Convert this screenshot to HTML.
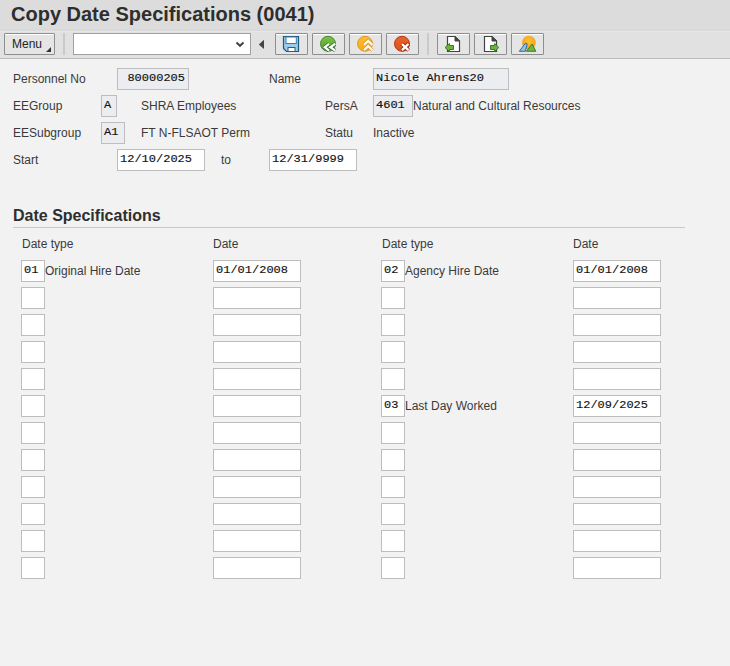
<!DOCTYPE html>
<html><head><meta charset="utf-8">
<style>
*{box-sizing:border-box;margin:0;padding:0}
html,body{width:730px;height:666px;overflow:hidden;background:#f2f2f2;font-family:"Liberation Sans",sans-serif;color:#333}
.a{position:absolute}
#title{left:0;top:0;width:730px;height:31px;background:#dcdcdc;border-bottom:2px solid #dadada}
#title span{position:absolute;left:11px;top:3px;font-size:20px;font-weight:bold;color:#2e2e2e;white-space:nowrap;line-height:23px}
#tb{left:0;top:31px;width:730px;height:28px;background:#e1e1e1;border-top:1px solid #e6e6e6;border-bottom:1px solid #bdbdbd}
.btn{position:absolute;top:33px;height:22px;width:33px;border:1px solid #8e8e8e;background:#e5e5e5;border-radius:1px;box-shadow:inset 0 1px 0 #fff}
.btn svg{position:absolute;left:0;top:0}
.sep{position:absolute;top:33px;width:2px;height:22px;background:#cacaca}
.lbl{position:absolute;font-size:12px;line-height:14px;white-space:nowrap;color:#3a3a3a}
.f{position:absolute;height:22px;border:1px solid #bdbdbd;background:#fff;font-family:"Liberation Mono",monospace;font-size:12px;line-height:20px;padding-left:2px;color:#111;white-space:nowrap}
.ro{background:#ebedf0}
.t{display:inline-block;transform:translateY(-1px) scaleY(0.95);transform-origin:0 15px;-webkit-text-stroke:0.15px #111}
</style></head><body>
<div id="title" class="a"><span>Copy Date Specifications (0041)</span></div>
<div id="tb" class="a"></div>
<div class="btn" style="left:4px;width:51px">
  <span style="position:absolute;left:7px;top:3px;font-size:12px;line-height:14px;color:#222">Menu</span>
  <svg width="51" height="22" style="position:absolute;left:-1px;top:-1px"><polygon points="42,19 47,14 47,19" fill="#333"/></svg>
</div>
<div class="sep" style="left:63px"></div>
<div class="a" style="left:73px;top:33px;width:178px;height:22px;border:1px solid #a0a0a0;background:#fff">
  <svg width="178" height="22" style="position:absolute;left:-1px;top:-1px"><polyline points="163.5,9.5 167,12.8 170.5,9.5" fill="none" stroke="#444" stroke-width="2"/></svg>
</div>

<div class="btn" style="left:275px"></div>
<div class="btn" style="left:312px"></div>
<div class="btn" style="left:349px"></div>
<div class="btn" style="left:386px"></div>
<div class="sep" style="left:427px"></div>
<div class="btn" style="left:437px"></div>
<div class="btn" style="left:474px"></div>
<div class="btn" style="left:511px"></div>

<!-- header form -->
<div class="lbl" style="left:13px;top:72px">Personnel No</div>
<div class="f ro" style="left:117px;top:68px;width:72px;text-align:right;padding-right:3px"><span class="t">80000205</span></div>
<div class="lbl" style="left:269px;top:72px">Name</div>
<div class="f ro" style="left:373px;top:68px;width:136px"><span class="t">Nicole Ahrens20</span></div>

<div class="lbl" style="left:13px;top:99px">EEGroup</div>
<div class="f ro" style="left:101px;top:95px;width:16px"><span class="t">A</span></div>
<div class="lbl" style="left:141px;top:99px">SHRA Employees</div>
<div class="lbl" style="left:325px;top:99px">PersA</div>
<div class="f ro" style="left:373px;top:95px;width:40px"><span class="t">4601</span></div>
<div class="lbl" style="left:413px;top:99px">Natural and Cultural Resources</div>

<div class="lbl" style="left:13px;top:126px">EESubgroup</div>
<div class="f ro" style="left:101px;top:122px;width:24px"><span class="t">A1</span></div>
<div class="lbl" style="left:141px;top:126px">FT N-FLSAOT Perm</div>
<div class="lbl" style="left:325px;top:126px">Statu</div>
<div class="lbl" style="left:373px;top:126px">Inactive</div>

<div class="lbl" style="left:13px;top:153px">Start</div>
<div class="f" style="left:117px;top:149px;width:88px"><span class="t">12/10/2025</span></div>
<div class="lbl" style="left:221px;top:153px">to</div>
<div class="f" style="left:269px;top:149px;width:88px"><span class="t">12/31/9999</span></div>

<!-- section -->
<div class="a" style="left:13px;top:206px;font-size:16px;font-weight:bold;line-height:19px;color:#2e2e2e;white-space:nowrap">Date Specifications</div>
<div class="a" style="left:13px;top:227px;width:672px;height:1px;background:#c8c8c8"></div>
<div class="lbl" style="left:22px;top:237px">Date type</div>
<div class="lbl" style="left:213px;top:237px">Date</div>
<div class="lbl" style="left:382px;top:237px">Date type</div>
<div class="lbl" style="left:573px;top:237px">Date</div>
<div class="f" style="left:21px;top:260px;width:24px"><span class="t">01</span></div>
<div class="lbl" style="left:45px;top:264px">Original Hire Date</div>
<div class="f" style="left:213px;top:260px;width:88px"><span class="t">01/01/2008</span></div>
<div class="f" style="left:381px;top:260px;width:24px"><span class="t">02</span></div>
<div class="lbl" style="left:405px;top:264px">Agency Hire Date</div>
<div class="f" style="left:573px;top:260px;width:88px"><span class="t">01/01/2008</span></div>
<div class="f" style="left:21px;top:287px;width:24px"></div>
<div class="f" style="left:213px;top:287px;width:88px"></div>
<div class="f" style="left:381px;top:287px;width:24px"></div>
<div class="f" style="left:573px;top:287px;width:88px"></div>
<div class="f" style="left:21px;top:314px;width:24px"></div>
<div class="f" style="left:213px;top:314px;width:88px"></div>
<div class="f" style="left:381px;top:314px;width:24px"></div>
<div class="f" style="left:573px;top:314px;width:88px"></div>
<div class="f" style="left:21px;top:341px;width:24px"></div>
<div class="f" style="left:213px;top:341px;width:88px"></div>
<div class="f" style="left:381px;top:341px;width:24px"></div>
<div class="f" style="left:573px;top:341px;width:88px"></div>
<div class="f" style="left:21px;top:368px;width:24px"></div>
<div class="f" style="left:213px;top:368px;width:88px"></div>
<div class="f" style="left:381px;top:368px;width:24px"></div>
<div class="f" style="left:573px;top:368px;width:88px"></div>
<div class="f" style="left:21px;top:395px;width:24px"></div>
<div class="f" style="left:213px;top:395px;width:88px"></div>
<div class="f" style="left:381px;top:395px;width:24px"><span class="t">03</span></div>
<div class="lbl" style="left:405px;top:399px">Last Day Worked</div>
<div class="f" style="left:573px;top:395px;width:88px"><span class="t">12/09/2025</span></div>
<div class="f" style="left:21px;top:422px;width:24px"></div>
<div class="f" style="left:213px;top:422px;width:88px"></div>
<div class="f" style="left:381px;top:422px;width:24px"></div>
<div class="f" style="left:573px;top:422px;width:88px"></div>
<div class="f" style="left:21px;top:449px;width:24px"></div>
<div class="f" style="left:213px;top:449px;width:88px"></div>
<div class="f" style="left:381px;top:449px;width:24px"></div>
<div class="f" style="left:573px;top:449px;width:88px"></div>
<div class="f" style="left:21px;top:476px;width:24px"></div>
<div class="f" style="left:213px;top:476px;width:88px"></div>
<div class="f" style="left:381px;top:476px;width:24px"></div>
<div class="f" style="left:573px;top:476px;width:88px"></div>
<div class="f" style="left:21px;top:503px;width:24px"></div>
<div class="f" style="left:213px;top:503px;width:88px"></div>
<div class="f" style="left:381px;top:503px;width:24px"></div>
<div class="f" style="left:573px;top:503px;width:88px"></div>
<div class="f" style="left:21px;top:530px;width:24px"></div>
<div class="f" style="left:213px;top:530px;width:88px"></div>
<div class="f" style="left:381px;top:530px;width:24px"></div>
<div class="f" style="left:573px;top:530px;width:88px"></div>
<div class="f" style="left:21px;top:557px;width:24px"></div>
<div class="f" style="left:213px;top:557px;width:88px"></div>
<div class="f" style="left:381px;top:557px;width:24px"></div>
<div class="f" style="left:573px;top:557px;width:88px"></div>
<svg class="a" style="left:0;top:0;pointer-events:none" width="730" height="60">
<polygon points="258.8,44.4 264,39.8 264,49" fill="#444"/>
<path d="M283.5,36.5 H298.5 V51.5 H286.5 L283.5,48.5 Z" fill="#9ccbec" stroke="#1b5a82" stroke-width="1.2"/>
<rect x="286" y="37" width="10.3" height="6.5" fill="#fff" stroke="#3a7aa5" stroke-width="1"/>
<rect x="288" y="47.5" width="7" height="4" fill="#fff" stroke="#1f5f8a" stroke-width="1"/>
<defs><linearGradient id="gG" x1="0" y1="0" x2="0" y2="1"><stop offset="0" stop-color="#7cc444"/><stop offset="1" stop-color="#4e9e2e"/></linearGradient>
<linearGradient id="gO" x1="0" y1="0" x2="0" y2="1"><stop offset="0" stop-color="#fcc02a"/><stop offset="1" stop-color="#f6a81e"/></linearGradient>
<linearGradient id="gR" x1="0" y1="0" x2="0" y2="1"><stop offset="0" stop-color="#e9642a"/><stop offset="1" stop-color="#d9501e"/></linearGradient></defs>
<circle cx="328" cy="43.8" r="7.5" fill="url(#gG)" stroke="#3d7f2c" stroke-width="0.9"/>
<polyline points="329,43.8 324.8,47.2 329,50.6" fill="none" stroke="#2f5f2a" stroke-width="3.6" stroke-linejoin="round"/>
<polyline points="335.2,43.8 330.4,47.2 335.2,50.6" fill="none" stroke="#2f5f2a" stroke-width="3.6" stroke-linejoin="round"/>
<polyline points="329,43.8 324.8,47.2 329,50.6" fill="none" stroke="#fff" stroke-width="2.3"/>
<polyline points="335.2,43.8 330.4,47.2 335.2,50.6" fill="none" stroke="#fff" stroke-width="2.3"/>
<circle cx="365" cy="43.8" r="7.5" fill="url(#gO)" stroke="#e0922a" stroke-width="0.9"/>
<polyline points="364,44.8 368.2,40.8 372.4,44.8" fill="none" stroke="#d38a2e" stroke-width="3.6" stroke-linejoin="round"/>
<polyline points="364,50.2 368.2,46.2 372.4,50.2" fill="none" stroke="#d38a2e" stroke-width="3.6" stroke-linejoin="round"/>
<polyline points="364,44.8 368.2,40.8 372.4,44.8" fill="none" stroke="#fffbe8" stroke-width="2.3"/>
<polyline points="364,50.2 368.2,46.2 372.4,50.2" fill="none" stroke="#fffbe8" stroke-width="2.3"/>
<circle cx="402" cy="43.8" r="7.5" fill="url(#gR)" stroke="#b3361a" stroke-width="1"/>
<path d="M401.8,43.8 L408.6,50.4 M408.6,43.8 L401.8,50.4" stroke="#9a2c16" stroke-width="4"/>
<path d="M402,44 L408.4,50.2 M408.4,44 L402,50.2" stroke="#fff" stroke-width="2.4"/>
<path d="M447.5,36.5 H455 L459.5,41 V51.5 H447.5 Z" fill="#fff" stroke="#444" stroke-width="1.2"/>
<polygon points="455,36.5 455,41 459.5,41" fill="#444" stroke="#444" stroke-width="1"/>
<polygon points="445,47.5 449.5,43.5 449.5,45.5 453.5,45.5 453.5,49.5 449.5,49.5 449.5,51.5" fill="#6ab43a" stroke="#3a7a2a" stroke-width="1"/>
<path d="M484.5,36.5 H492 L496.5,41 V51.5 H484.5 Z" fill="#fff" stroke="#444" stroke-width="1.2"/>
<polygon points="492,36.5 492,41 496.5,41" fill="#444" stroke="#444" stroke-width="1"/>
<polygon points="498.8,47.5 494.6,43.5 494.6,45.5 490.5,45.5 490.5,49.5 494.6,49.5 494.6,51.5" fill="#6ab43a" stroke="#3a7a2a" stroke-width="1"/>
<defs><radialGradient id="sun" cx="0.5" cy="0.4" r="0.6"><stop offset="0" stop-color="#fcc52c"/><stop offset="1" stop-color="#f39c22"/></radialGradient></defs>
<circle cx="528.9" cy="42.7" r="6.9" fill="url(#sun)"/>
<polygon points="519.3,51.3 525.5,43 527.2,43.9 525.3,51.3" fill="#8fc3ea" stroke="#2b6c9c" stroke-width="1"/>
<polygon points="526.4,51.3 532.2,44 535.8,51.3" fill="#6cb83c" stroke="#3b7a2a" stroke-width="1"/>
</svg>
</body></html>
